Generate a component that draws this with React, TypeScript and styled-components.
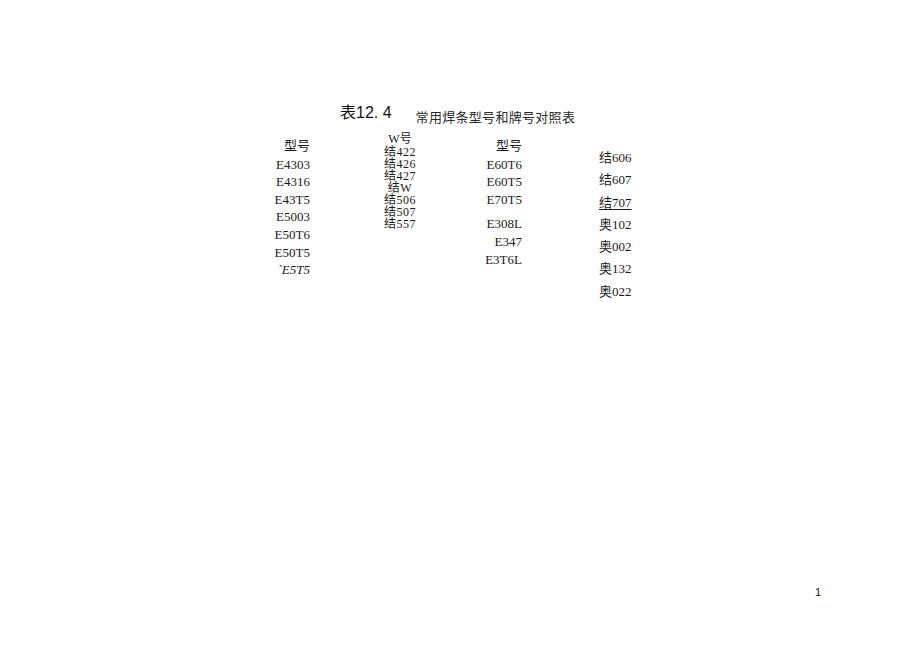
import { createGlobalStyle, styled } from "styled-components";

const GlobalStyle = createGlobalStyle`
  html, body {
    margin: 0;
    padding: 0;
    background: #ffffff;
  }
`;

const Sheet = styled.div`
  width: 920px;
  height: 652px;
  display: flex;
  flex-direction: column;
  padding-top: 103px;
  box-sizing: border-box;
  color: #1a1a1a;
  font-family: "Liberation Serif", "Noto Sans CJK SC", serif;
`;

const TitleRow = styled.div`
  display: flex;
  align-items: flex-start;
  padding-left: 340px;
`;

const Title = styled.h1`
  margin: 0;
  font-family: "Liberation Sans", "Noto Sans CJK SC", sans-serif;
  font-weight: 400;
  font-size: 16px;
  line-height: 20px;
  color: #111111;
`;

const Subtitle = styled.span`
  margin: 7px 0 0 24px;
  font-family: "Liberation Sans", "Noto Sans CJK SC", sans-serif;
  font-size: 13px;
  line-height: 16px;
  letter-spacing: 0.3px;
  color: #2a2a2a;
`;

const Table = styled.div`
  display: flex;
  align-items: flex-start;
  margin-top: 5px;
  padding-left: 270px;
`;

const Column = styled.div<{ $w: number; $ml?: number; $pt: number; $lh: number; $fs?: number; $align: string }>`
  display: flex;
  flex-direction: column;
  width: ${(p) => p.$w}px;
  margin-left: ${(p) => p.$ml ?? 0}px;
  padding-top: ${(p) => p.$pt}px;
  text-align: ${(p) => p.$align};
  font-size: ${(p) => p.$fs ?? 13}px;
  line-height: ${(p) => p.$lh}px;
  white-space: nowrap;
`;

const Head = styled.div<{ $mb: number }>`
  margin-bottom: ${(p) => p.$mb}px;
`;

const Cell = styled.div<{ $mt?: number; $italic?: boolean; $underline?: boolean }>`
  margin-top: ${(p) => p.$mt ?? 0}px;
  font-style: ${(p) => (p.$italic ? "italic" : "normal")};
  text-decoration: ${(p) => (p.$underline ? "underline" : "none")};
  text-underline-offset: 2px;
`;

const NarrowCell = styled.div`
  letter-spacing: 0.5px;
`;

const Footer = styled.div`
  margin-top: auto;
  padding: 0 99px 53px 0;
  text-align: right;
  font-family: "Liberation Sans", sans-serif;
  font-size: 11px;
  line-height: 14px;
  color: #111111;
`;

const col1 = ["E4303", "E4316", "E43T5", "E5003", "E50T6", "E50T5"];
const col2 = ["结422", "结426", "结427", "结W", "结506", "结507", "结557"];
const col4 = ["结606", "结607", "结707", "奥102", "奥002", "奥132", "奥022"];

export default function App() {
  return (
    <>
      <GlobalStyle />
      <Sheet>
        <TitleRow>
          <Title>表12. 4</Title>
          <Subtitle>常用焊条型号和牌号对照表</Subtitle>
        </TitleRow>
        <Table>
          <Column $w={40} $pt={6} $lh={17.6} $align="right">
            <Head $mb={1}>型号</Head>
            {col1.map((c) => (
              <Cell key={c}>{c}</Cell>
            ))}
            <Cell $italic>`E5T5</Cell>
          </Column>
          <Column $w={60} $ml={60} $pt={2} $lh={12} $fs={12} $align="center">
            <Head $mb={1}>W号</Head>
            {col2.map((c) => (
              <NarrowCell key={c}>{c}</NarrowCell>
            ))}
          </Column>
          <Column $w={52} $ml={40} $pt={6} $lh={17.6} $align="right">
            <Head $mb={1}>型号</Head>
            <Cell>E60T6</Cell>
            <Cell>E60T5</Cell>
            <Cell>E70T5</Cell>
            <Cell $mt={7}>E308L</Cell>
            <Cell>E347</Cell>
            <Cell>E3T6L</Cell>
          </Column>
          <Column $w={60} $ml={77} $pt={16} $lh={22.3} $align="left">
            {col4.map((c) => (
              <Cell key={c} $underline={c === "结707"}>
                {c}
              </Cell>
            ))}
          </Column>
        </Table>
        <Footer>1</Footer>
      </Sheet>
    </>
  );
}
